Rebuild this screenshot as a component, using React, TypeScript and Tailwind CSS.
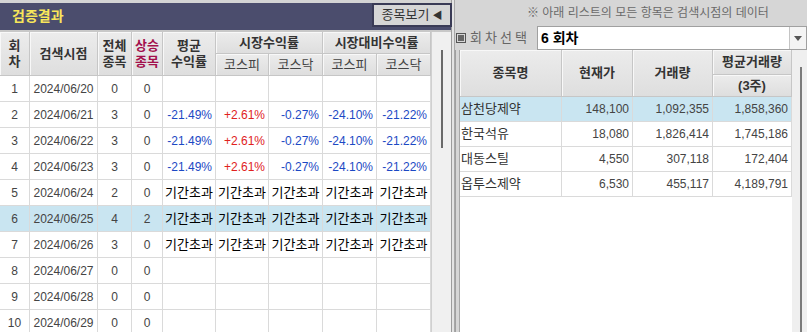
import React from "react";

const FONT = { fontFamily: '"Liberation Sans", "Noto Sans CJK KR", sans-serif' };

type Row = { n: number; date: string; total: number; up: number; vals: string[]; sel?: boolean };

const pct = ["-21.49%", "+2.61%", "-0.27%", "-24.10%", "-21.22%"];
const over = ["기간초과", "기간초과", "기간초과", "기간초과", "기간초과"];

const rows: Row[] = [
  { n: 1, date: "2024/06/20", total: 0, up: 0, vals: [] },
  { n: 2, date: "2024/06/21", total: 3, up: 0, vals: pct },
  { n: 3, date: "2024/06/22", total: 3, up: 0, vals: pct },
  { n: 4, date: "2024/06/23", total: 3, up: 0, vals: pct },
  { n: 5, date: "2024/06/24", total: 2, up: 0, vals: over },
  { n: 6, date: "2024/06/25", total: 4, up: 2, vals: over, sel: true },
  { n: 7, date: "2024/06/26", total: 3, up: 0, vals: over },
  { n: 8, date: "2024/06/27", total: 0, up: 0, vals: [] },
  { n: 9, date: "2024/06/28", total: 0, up: 0, vals: [] },
  { n: 10, date: "2024/06/29", total: 0, up: 0, vals: [] },
];

const stocks = [
  ["삼천당제약", "148,100", "1,092,355", "1,858,360"],
  ["한국석유", "18,080", "1,826,414", "1,745,186"],
  ["대동스틸", "4,550", "307,118", "172,404"],
  ["옵투스제약", "6,530", "455,117", "4,189,791"],
];

const hcell =
  "flex items-center justify-center text-center border-r border-b border-[#c6c6c6] bg-gradient-to-b from-[#ececec] to-[#dedede] shadow-[inset_1px_1px_0_#f8f8f8]";

function ValueCell({ v }: { v?: string }) {
  if (!v) return <div className="border-r border-b border-[#dadada]" />;
  if (v === "기간초과")
    return (
      <div className="flex items-center justify-center border-r border-b border-[#dadada] text-[13px] text-black whitespace-nowrap overflow-hidden">
        {v}
      </div>
    );
  const color = v.startsWith("+") ? "text-[#e0221e]" : "text-[#1c49c4]";
  return (
    <div className={`flex items-center justify-end pr-[3px] border-r border-b border-[#dadada] text-[12px] ${color}`}>
      {v}
    </div>
  );
}

export default function App() {
  return (
    <div style={FONT} className="w-[807px] h-[332px] overflow-hidden bg-[#d6d6d6] flex text-[#333]">
      {/* Left panel */}
      <div className="w-[452px] flex flex-col border-r border-[#9c9c9c] bg-[#d6d6d6]">
        <div className="h-[3px] bg-[#d4d4d4]" />
        <div className="h-[27px] bg-[#4b4d6d] flex items-start justify-between">
          <div className="pl-[12px] pt-[4px] text-[14px] font-bold text-[#f8e65a] leading-[18px]">검증결과</div>
          <div className="h-[24px] w-[80px] mr-[-1px] border-2 border-[#3a3b56] bg-[#d6d6d6] flex items-center justify-center gap-[3px] text-[13px] text-[#333]">
            <span>종목보기</span>
            <span className="text-[10px] text-[#333]">◀</span>
          </div>
        </div>
        <div className="h-[2px] bg-[#c8c8c8]" />
        <div className="flex flex-1 min-h-0 bg-white">
          <div className="w-[431px] flex flex-col">
            <div className="grid grid-cols-[30px_68px_34px_31px_53px_53px_54px_54px_54px] grid-rows-[22px_22px] text-[13px]">
              <div className={`${hcell} row-span-2 font-bold leading-[16px]`}>회<br />차</div>
              <div className={`${hcell} row-span-2 font-bold`}>검색시점</div>
              <div className={`${hcell} row-span-2 font-bold leading-[16px]`}>전체<br />종목</div>
              <div className={`${hcell} row-span-2 font-bold leading-[16px] text-[#a3104c]`}>상승<br />종목</div>
              <div className={`${hcell} row-span-2 font-bold leading-[16px]`}>평균<br />수익률</div>
              <div className={`${hcell} col-span-2 font-bold`}>시장수익률</div>
              <div className={`${hcell} col-span-2 font-bold`}>시장대비수익률</div>
              <div className={`${hcell} text-[#444]`}>코스피</div>
              <div className={`${hcell} text-[#444]`}>코스닥</div>
              <div className={`${hcell} text-[#444]`}>코스피</div>
              <div className={`${hcell} text-[#444]`}>코스닥</div>
            </div>
            {rows.map((r) => (
              <div
                key={r.n}
                className={`grid grid-cols-[30px_68px_34px_31px_53px_53px_54px_54px_54px] h-[26px] shrink-0 text-[12px] ${
                  r.sel ? "bg-[#c9e5f1]" : "bg-white"
                }`}
              >
                <div className="flex items-center justify-center border-r border-b border-[#dadada] text-[#444]">{r.n}</div>
                <div className="flex items-center justify-center border-r border-b border-[#dadada] text-[#444]">{r.date}</div>
                <div className="flex items-center justify-center border-r border-b border-[#dadada] text-[#444]">{r.total}</div>
                <div className="flex items-center justify-center border-r border-b border-[#dadada] text-[#444]">{r.up}</div>
                {[0, 1, 2, 3, 4].map((i) => (
                  <ValueCell key={i} v={r.vals[i]} />
                ))}
              </div>
            ))}
          </div>
          <div className="w-[20px] bg-[#f0f0f0] border-l border-[#d0d0d0] flex flex-col pt-[18px] pl-[9px]">
            <div className="w-[2px] h-[98px] bg-[#6a6a6a]" />
          </div>
        </div>
      </div>
      {/* Separator */}
      <div className="w-[4px] bg-[#e4e4e4] border-r border-[#a8a8a8]" />
      {/* Right panel */}
      <div className="flex-1 flex flex-col bg-[#d6d6d6]">
        <div className="h-[26px] flex items-center pl-[72px] text-[12px] text-[#6a6a6a] whitespace-nowrap">
          ※ 아래 리스트의 모든 항목은 검색시점의 데이터
        </div>
        <div className="h-[24px] flex items-center">
          <div className="ml-[1px] w-[10px] h-[10px] border border-[#555] flex items-center justify-center">
            <div className="w-[6px] h-[6px] bg-[#666]" />
          </div>
          <div className="ml-[4px] w-[67px] text-[13px] text-[#666] tracking-[3px] whitespace-nowrap">회차선택</div>
          <div className="flex-1 h-[24px] bg-white border border-[#a0a0a0] flex items-center">
            <div className="flex-1 pl-[3px] text-[14px] font-bold text-black">6 회차</div>
            <div className="w-[17px] h-full border-l border-[#c4c4c4] bg-[#f4f4f4] flex items-center justify-center">
              <div className="w-0 h-0 border-l-[4px] border-r-[4px] border-t-[5px] border-l-transparent border-r-transparent border-t-[#555]" />
            </div>
          </div>
        </div>
        <div className="flex-1 flex min-h-0 pl-[3px] border-l border-[#a0a0a0]">
          <div className="w-[333px] bg-white flex flex-col border-l border-[#a8a8a8]">
            <div className="grid grid-cols-[102px_71px_80px_79px] grid-rows-[25px_22px] text-[13px] font-bold">
              <div className={`${hcell} row-span-2`}>종목명</div>
              <div className={`${hcell} row-span-2`}>현재가</div>
              <div className={`${hcell} row-span-2`}>거래량</div>
              <div className={`${hcell}`}>평균거래량</div>
              <div className={`${hcell}`}>(3주)</div>
            </div>
            {stocks.map((s, i) => (
              <div
                key={s[0]}
                className={`grid grid-cols-[102px_71px_80px_79px] h-[25px] text-[12px] ${i === 0 ? "bg-[#c9e5f1]" : "bg-white"}`}
              >
                <div className="flex items-center pl-[1px] border-r border-b border-[#dadada] text-[13px] text-[#333]">{s[0]}</div>
                <div className="flex items-center justify-end pr-[3px] border-r border-b border-[#dadada] text-[#444]">{s[1]}</div>
                <div className="flex items-center justify-end pr-[3px] border-r border-b border-[#dadada] text-[#444]">{s[2]}</div>
                <div className="flex items-center justify-end pr-[3px] border-r border-b border-[#dadada] text-[#444]">{s[3]}</div>
              </div>
            ))}
          </div>
          <div className="w-[15px] bg-[#efefef] flex flex-col pt-[17px] pl-[8px]">
            <div className="w-[2px] flex-1 bg-[#7a7a7a]" />
          </div>
        </div>
      </div>
    </div>
  );
}
